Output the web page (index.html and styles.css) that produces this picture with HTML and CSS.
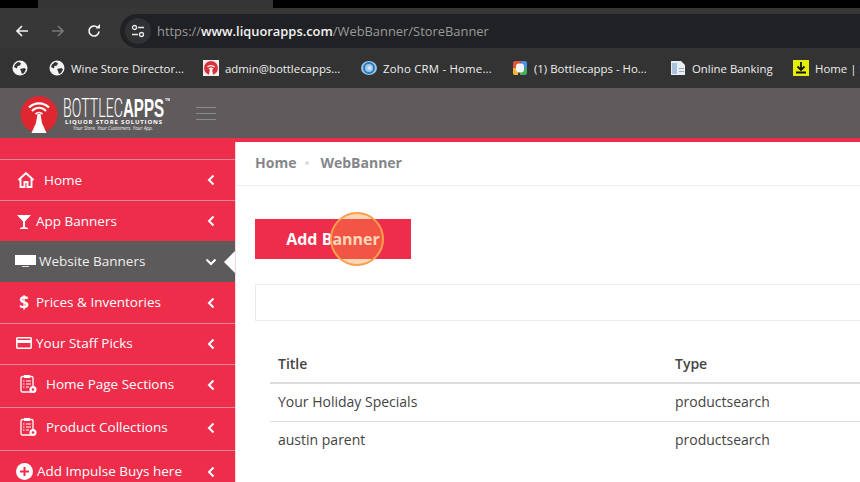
FILE: index.html
```html
<!DOCTYPE html>
<html lang="en">
<head>
<meta charset="utf-8">
<title>WebBanner</title>
<link rel="stylesheet" href="styles.css">
</head>
<body>
<div class="tabstrip"><div class="tab-a"></div><div class="tab-b"></div><div class="tab-c"></div></div>
<div class="toolbar">
  <svg class="nav-ic back" viewBox="0 0 16 16"><path d="M14 8H3M8 3L3 8l5 5" fill="none" stroke="#f1f1f1" stroke-width="1.7"/></svg>
  <svg class="nav-ic fwd" viewBox="0 0 16 16"><path d="M2 8h11M8 3l5 5-5 5" fill="none" stroke="#777" stroke-width="1.7"/></svg>
  <svg class="nav-ic reload" viewBox="0 0 16 16"><path d="M13 8.5A5 5 0 1 1 11.5 4.4" fill="none" stroke="#f1f1f1" stroke-width="1.7"/><path d="M9.5 5.5H14V1z" fill="#f1f1f1"/></svg>
  <div class="omnibox">
    <span class="chip"><svg class="tune" viewBox="0 0 14 14"><circle cx="3.5" cy="3.5" r="2" fill="none" stroke="#e8e8e8" stroke-width="1.3"/><path d="M7 3.5h6M1 10.5h6" stroke="#e8e8e8" stroke-width="1.3"/><circle cx="10.5" cy="10.5" r="2" fill="none" stroke="#e8e8e8" stroke-width="1.3"/></svg></span>
    <span class="url">https://<b>www.liquorapps.com</b>/WebBanner/StoreBanner</span>
  </div>
</div>
<div class="bookmarks">
  <svg class="bm-ic" viewBox="0 0 16 16"><use href="#globe"/></svg>
  <div class="bm"><svg class="bm-ic" viewBox="0 0 16 16"><defs><g id="globe"><circle cx="8" cy="8" r="7.5" fill="#f4f4f4"/><path d="M3 4.500l3-2.500 3 1-1 2.500-2.500.5-.5 2.500-3-1.500zM8 9l4.500-1 1.500 1.500-2 3.500-2 1-1-3z" fill="#333"/></g></defs><use href="#globe"/></svg><span>Wine Store Director...</span></div>
  <div class="bm"><svg class="bm-ic" viewBox="0 0 16 16"><rect width="16" height="16" fill="#eee"/><circle cx="8" cy="8" r="7" fill="#d9323f"/><path d="M4.500 7a5 5 0 0 1 7 0M6 9a3 3 0 0 1 4 0" fill="none" stroke="#fff" stroke-width="1.200"/><path d="M7 9h2l1 6H6z" fill="#fff"/></svg><span>admin@bottlecapps...</span></div>
  <div class="bm"><svg class="bm-ic" viewBox="0 0 16 16"><ellipse cx="8" cy="8" rx="8" ry="7" fill="#9fc6e6"/><circle cx="8" cy="8" r="5" fill="none" stroke="#2a78c0" stroke-width="2"/><circle cx="8.500" cy="8" r="2" fill="#cfe3f3"/></svg><span class="wide">Zoho CRM - Home...</span></div>
  <div class="bm"><svg class="bm-ic" viewBox="0 0 16 16"><path d="M3 1h6L6 15H3a2 2 0 0 1-2-2V3a2 2 0 0 1 2-2z" fill="#e0533d"/><path d="M9 1h4a2 2 0 0 1 2 2v5H8z" fill="#4d90e0"/><path d="M15 8v5a2 2 0 0 1-2 2H8V8z" fill="#45ad5d"/><path d="M1 8h5v7H3a2 2 0 0 1-2-2z" fill="#f2b632"/><rect x="4" y="3.500" width="8" height="9" rx="3" fill="#f4f4f4"/></svg><span>(1) Bottlecapps - Ho...</span></div>
  <div class="bm"><svg class="bm-ic" viewBox="0 0 16 16"><path d="M1 1h10l4 4v10H1z" fill="#e9eef3"/><path d="M2 3h5v11H2z" fill="#a9c4dc"/><path d="M9 8h5v1H9zM9 11h5v1H9z" fill="#9ab"/></svg><span>Online Banking</span></div>
  <div class="bm"><svg class="bm-ic" viewBox="0 0 16 16"><rect width="16" height="16" fill="#e4f000"/><path d="M8 2v7M4.500 6.500L8 10l3.500-3.500M3 12.500h10" fill="none" stroke="#111" stroke-width="1.800"/></svg><span>Home | Dashboard</span></div>
</div>
<header class="apphead">
  <svg class="logo" viewBox="0 0 150 40" role="img">
    <circle cx="19" cy="19.500" r="18.500" fill="#de2731"/>
    <path d="M9 12.500a14 14 0 0 1 20 0" fill="none" stroke="#fff" stroke-width="2.200"/>
    <path d="M12 16a9 9 0 0 1 14 0" fill="none" stroke="#fff" stroke-width="2"/>
    <path d="M15.500 19a5 5 0 0 1 7 0" fill="none" stroke="#fff" stroke-width="1.800"/>
    <path d="M17.500 19h3l1.500 9 4.500 10h-15L16 28z" fill="#fff"/>
    <text class="logo-thin" x="43" y="22" textLength="60" lengthAdjust="spacingAndGlyphs">BOTTLEC</text>
    <text class="logo-bold" x="103" y="22" textLength="41" lengthAdjust="spacingAndGlyphs">APPS</text>
    <text class="logo-tm" x="145" y="6">TM</text>
    <text class="logo-sub" x="45" y="29" textLength="97" lengthAdjust="spacing">LIQUOR STORE SOLUTIONS</text>
    <text class="logo-tag" x="53" y="35" textLength="80" lengthAdjust="spacingAndGlyphs">Your Store. Your Customers. Your App.</text>
  </svg>
  <div class="burger"><i></i><i></i><i></i></div>
</header>
<div class="page">
  <nav class="sidebar">
    <div class="side-top"></div>
    <a class="item h41 lo"><svg class="ic w20 pad-home" viewBox="0 0 18 18"><path d="M1.500 9L9 2l7.500 7M3.500 8v8h4v-5h3v5h4V8" fill="none" stroke="#fff" stroke-width="1.900"/></svg><span class="lbl">Home</span><svg class="chev" viewBox="0 0 8 12"><path d="M6.500 1.500L2 6l4.500 4.500" fill="none" stroke="#fff" stroke-width="2"/></svg></a>
    <a class="item h41 lo"><svg class="ic w14 pad-app" viewBox="0 0 14 15"><path d="M0 1h14L8 7.500V13l3 1v1H3v-1l3-1V7.500z" fill="#fff"/></svg><span class="lbl">App Banners</span><svg class="chev" viewBox="0 0 8 12"><path d="M6.500 1.500L2 6l4.500 4.500" fill="none" stroke="#fff" stroke-width="2"/></svg></a>
    <a class="item h41 active"><svg class="ic w21 pad-web" viewBox="0 0 21 13"><rect width="21" height="10" fill="#fff"/><rect x="7" y="11" width="7" height="1" fill="#ddd"/></svg><span class="lbl">Website Banners</span><svg class="chev down" viewBox="0 0 12 8"><path d="M1.500 1.500L6 6l4.500-4.500" fill="none" stroke="#fff" stroke-width="2"/></svg><span class="notch"></span></a>
    <a class="item h41"><span class="dollar">$</span><span class="lbl">Prices &amp; Inventories</span><svg class="chev" viewBox="0 0 8 12"><path d="M6.500 1.500L2 6l4.500 4.500" fill="none" stroke="#fff" stroke-width="2"/></svg></a>
    <a class="item h41"><svg class="ic w16 pad-card" viewBox="0 0 16 12"><path d="M1.500.800h13a.7.7 0 0 1 .7.7v9a.7.7 0 0 1-.7.7h-13a.7.7 0 0 1-.7-.7v-9a.7.7 0 0 1 .7-.7z" fill="none" stroke="#fff" stroke-width="1.500"/><rect x="1" y="3" width="14" height="3" fill="#fff"/></svg><span class="lbl">Your Staff Picks</span><svg class="chev" viewBox="0 0 8 12"><path d="M6.500 1.500L2 6l4.500 4.500" fill="none" stroke="#fff" stroke-width="2"/></svg></a>
    <a class="item h43 hi"><svg class="ic clip" viewBox="0 0 17 20"><defs><g id="clip"><rect x="1" y="2.500" width="12" height="15.500" rx="1.500" fill="none" stroke="#fff" stroke-width="1.300"/><rect x="4" y="1" width="6" height="3" fill="#fff"/><path d="M3 7h1.500M3 10h1.500M3 13h1.500M6 7h5M6 10h5M6 13h3" stroke="#fff"/><circle cx="13" cy="15.500" r="3.500" fill="#fff"/><circle cx="13" cy="15.500" r="1.300" fill="#ee2d4b"/></g></defs><use href="#clip"/></svg><span class="lbl">Home Page Sections</span><svg class="chev" viewBox="0 0 8 12"><path d="M6.500 1.500L2 6l4.500 4.500" fill="none" stroke="#fff" stroke-width="2"/></svg></a>
    <a class="item h43 hi"><svg class="ic clip" viewBox="0 0 17 20"><use href="#clip"/></svg><span class="lbl">Product Collections</span><svg class="chev" viewBox="0 0 8 12"><path d="M6.500 1.500L2 6l4.500 4.500" fill="none" stroke="#fff" stroke-width="2"/></svg></a>
    <a class="item h43"><svg class="ic w17 pad-add" viewBox="0 0 17 17"><circle cx="8.500" cy="8.500" r="8.500" fill="#fff"/><path d="M8.500 4v9M4 8.500h9" stroke="#ee2d4b" stroke-width="2"/></svg><span class="lbl">Add Impulse Buys here</span><svg class="chev" viewBox="0 0 8 12"><path d="M6.500 1.500L2 6l4.500 4.500" fill="none" stroke="#fff" stroke-width="2"/></svg></a>
  </nav>
  <main class="main">
    <div class="crumbs"><span>Home</span><i class="dot"></i><span>WebBanner</span></div>
    <div class="content">
      <div class="btn-wrap"><a class="btn">Add Banner</a><span class="ripple"></span></div>
      <div class="filter"></div>
      <table class="tbl">
        <thead><tr><th class="c1">Title</th><th>Type</th></tr></thead>
        <tbody>
          <tr><td>Your Holiday Specials</td><td>productsearch</td></tr>
          <tr><td>austin parent</td><td>productsearch</td></tr>
        </tbody>
      </table>
      <div class="foot">Showing 1 to 2</div>
    </div>
  </main>
</div>
</body>
</html>
```
FILE: styles.css
```css
* { box-sizing: border-box; }
html, body { margin: 0; padding: 0; width: 860px; height: 482px; overflow: hidden; background: #fff; font-family: "Open Sans", "Noto Sans", sans-serif; }

.tabstrip { display: flex; height: 8px; background: #000; }
.tab-a { width: 38px; background: #000; border-bottom-right-radius: 8px; }
.tab-b { width: 235px; background: #353535; }
.tab-c { flex: 1; background: #000; }

.toolbar { display: flex; align-items: flex-start; height: 40px; background: #373737; position: relative; }
.nav-ic { width: 16px; height: 16px; flex: none; margin-top: 15px; }
.back { margin-left: 14px; }
.fwd { margin-left: 20px; }
.reload { margin-left: 20px; }
.omnibox { flex: 1; height: 34px; margin: 6px 0 0 18px; background: #202124; border-radius: 17px 0 0 17px; display: flex; align-items: center; padding-left: 5px; }
.chip { width: 26px; height: 26px; border-radius: 50%; background: #303134; display: flex; align-items: center; justify-content: center; flex: none; }
.tune { width: 14px; height: 14px; }
.url { margin-left: 6px; font-size: 12.900px; color: #9a9a9a; white-space: nowrap; }
.url b { font-weight: 600; color: #f2f2f2; }

.bookmarks { display: grid; grid-template-columns: 37px 154px 158px 151px 158px 123px 120px; align-items: center; height: 40px; background: #333; overflow: hidden; padding-left: 12px; white-space: nowrap; }
.bm-ic { width: 16px; height: 16px; flex: none; }
.bm { display: flex; align-items: center; gap: 6px; font-size: 11.400px; color: #eee; min-width: 0; overflow: hidden; }
.wide { letter-spacing: .2px; }

.apphead { display: flex; align-items: center; height: 50px; background: #5f5b5c; padding-left: 20px; }
.logo { width: 150px; height: 40px; flex: none; margin-top: 4px; }
.logo-thin { font: 300 25px "Roboto", "Liberation Sans", sans-serif; fill: #fff; }
.logo-bold { font: 700 25px "Liberation Sans", sans-serif; fill: #fff; }
.logo-tm { font: 700 3.500px "Liberation Sans", sans-serif; fill: #fff; }
.logo-sub { font: 700 6px "Open Sans", sans-serif; fill: #fff; }
.logo-tag { font: italic 400 4.500px "Open Sans", sans-serif; fill: #eee; }
.burger { display: flex; flex-direction: column; gap: 5px; margin-left: 26px; }
.burger i { display: block; width: 20px; height: 1px; background: #8d8a8b; }

.page { display: flex; height: 344px; border-top: 4px solid #ee2d4b; }
.sidebar { width: 235px; flex: none; background: #ee2d4b; }
.side-top { height: 17px; }
.item { display: flex; align-items: center; position: relative; color: #fff; font-size: 13.500px; border-top: 1px solid #db8a96; padding-bottom: 2px; }
.h41 { height: 41px; }
.h43 { height: 43px; }
.lo { padding-bottom: 0; }
.hi { padding-bottom: 4px; }
.active { background: #5c5a5b; border-top-color: #5c5a5b; color: #f0f0f0; }
.active + .item { border-top-color: #ee2d4b; }
.ic { flex: none; }
.w20 { width: 18px; height: 18px; }
.pad-home { margin: 0 9px 0 17px; }
.w14 { width: 14px; height: 15px; }
.pad-app { margin: 0 5px 0 17px; }
.w21 { width: 21px; height: 13px; }
.pad-web { margin: 0 3px 0 15px; }
.dollar { width: 12px; margin: 0 6px 0 18px; font-weight: 700; font-size: 17px; line-height: 1; text-align: center; }
.w16 { width: 16px; height: 12px; }
.pad-card { margin: 0 4px 0 16px; }
.clip { width: 17px; height: 20px; margin: 0 9px 0 20px; }
.w17 { width: 17px; height: 17px; }
.pad-add { margin: 0 4px 0 16px; }
.lbl { white-space: nowrap; }
.chev { position: absolute; left: 207px; top: 50%; width: 8px; height: 12px; margin-top: -6px; }
.hi .chev { margin-top: -7px; }
.chev.down { left: 205px; width: 12px; height: 8px; margin-top: -4px; }
.notch { position: absolute; right: 0; top: 9px; border-style: solid; border-width: 11px 11px 11px 0; border-color: transparent #fff transparent transparent; }

.main { flex: 1; min-width: 0; border-left: 1px solid #fbd5da; overflow: hidden; }
.crumbs { display: flex; align-items: center; height: 44px; padding: 0 0 2px 19px; border-bottom: 1px solid #eee; font-size: 14px; font-weight: 700; color: #84878a; }
.dot { width: 4px; height: 4px; border-radius: 50%; background: #ddd; margin: 0 11px 0 9px; }
.content { padding: 33px 0 0 19px; }
.btn-wrap { position: relative; width: 156px; height: 40px; }
.btn { display: flex; align-items: center; justify-content: center; height: 40px; background: #ee2d4b; color: #fff; font-weight: 700; font-size: 16px; }
.ripple { position: absolute; left: 75px; top: -7px; width: 54px; height: 54px; border-radius: 50%; border: 2px solid #fa9f4c; background: rgba(250, 150, 60, .38); }
.filter { height: 37px; margin-top: 25px; border: 1px solid #ebebeb; border-right: 0; }
.tbl { margin: 24px 0 0 15px; width: 590px; border-collapse: collapse; font-size: 14px; color: #444; table-layout: fixed; }
.tbl th { text-align: left; font-weight: 600; height: 38px; padding: 0 0 0 8px; border-bottom: 2px solid #ddd; }
.tbl td { height: 38px; padding: 0 0 2px 8px; border-bottom: 1px solid #ddd; }
.tbl tbody tr:last-child td { border-bottom: 0; }
.tbl .c1 { width: 397px; }
.foot { margin: 20px 0 0 15px; font-size: 14px; color: #bbb; }
```
